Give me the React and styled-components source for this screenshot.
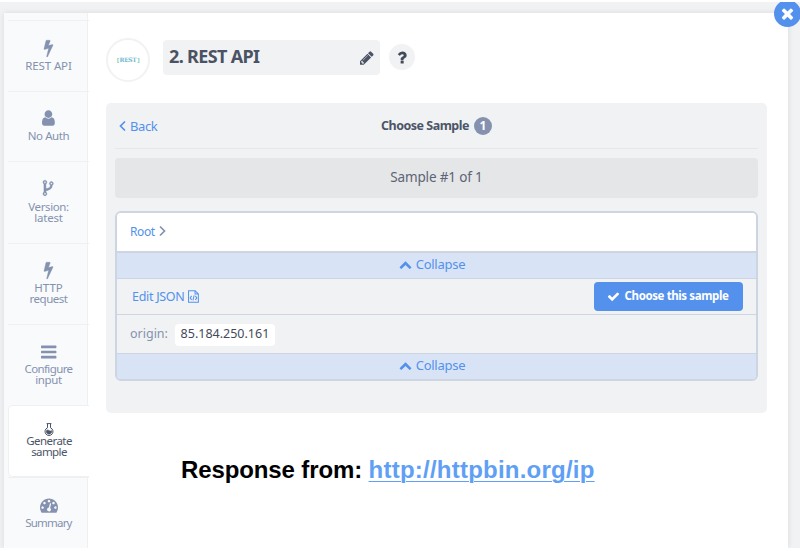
import React from "react";
import styled, { createGlobalStyle, css } from "styled-components";

const Global = createGlobalStyle`
  *{box-sizing:border-box}
  html,body,#root{margin:0;height:100%}
  body{overflow:hidden;background:#fff;font-family:"Noto Sans","Open Sans",sans-serif;color:#8492af}
`;

const PATHS = {
  bolt: [896, "M885 566q18 20 7 44l-540 1157q-13 25-42 25-4 0-14-2-17-5-25.5-19t-4.5-30l197-808-406 101q-4 1-12 1-18 0-31-11-18-15-13-39l201-825q4-14 16-23t28-9h328q19 0 32 12.5t13 29.5q0 8-5 18l-171 463 396-98q8-2 12-2 19 0 34 15z"],
  user: [1280, "M1280 1399q0 109-62.5 187t-150.5 78h-854q-88 0-150.5-78t-62.5-187q0-85 8.5-160.5t31.5-152 58.5-131 94-89 134.5-34.5q131 128 313 128t313-128q76 0 134.5 34.5t94 89 58.5 131 31.5 152 8.5 160.5zm-256-887q0 159-112.5 271.5t-271.5 112.5-271.5-112.5-112.5-271.5 112.5-271.5 271.5-112.5 271.5 112.5 112.5 271.5z"],
  fork: [1024, "M288 1472q0-40-28-68t-68-28-68 28-28 68 28 68 68 28 68-28 28-68zm0-1152q0-40-28-68t-68-28-68 28-28 68 28 68 68 28 68-28 28-68zm640 128q0-40-28-68t-68-28-68 28-28 68 28 68 68 28 68-28 28-68zm96 0q0 52-26 96.5t-70 69.5q-2 287-226 414-67 38-203 81-128 40-169.5 71t-41.5 100v26q44 25 70 69.5t26 96.5q0 80-56 136t-136 56-136-56-56-136q0-52 26-96.5t70-69.5v-820q-44-25-70-69.5t-26-96.5q0-80 56-136t136-56 136 56 56 136q0 52-26 96.5t-70 69.5v497q54-26 154-57 55-17 87.5-29.5t70.5-31 59-39.5 40.5-51 28-69.5 8.5-91.5q-44-25-70-69.5t-26-96.5q0-80 56-136t136-56 136 56 56 136z"],
  bars: [1536, "M1536 1344v128q0 26-19 45t-45 19h-1408q-26 0-45-19t-19-45v-128q0-26 19-45t45-19h1408q26 0 45 19t19 45zm0-512v128q0 26-19 45t-45 19h-1408q-26 0-45-19t-19-45v-128q0-26 19-45t45-19h1408q26 0 45 19t19 45zm0-512v128q0 26-19 45t-45 19h-1408q-26 0-45-19t-19-45v-128q0-26 19-45t45-19h1408q26 0 45 19t19 45z"],
  gauge: [1792, "M384 1152q0-53-37.5-90.5t-90.5-37.5-90.5 37.5-37.5 90.5 37.5 90.5 90.5 37.5 90.5-37.5 37.5-90.5zm192-448q0-53-37.5-90.5t-90.5-37.5-90.5 37.5-37.5 90.5 37.5 90.5 90.5 37.5 90.5-37.5 37.5-90.5zm428 481l101-382q6-26-7.5-48.5t-38.5-29.5-48 6.5-30 39.5l-101 382q-60 5-107 43.5t-63 98.5q-20 77 20 146t117 89 146-20 89-117q16-60-6-117t-72-91zm660-33q0-53-37.5-90.5t-90.5-37.5-90.5 37.5-37.5 90.5 37.5 90.5 90.5 37.5 90.5-37.5 37.5-90.5zm-640-640q0-53-37.5-90.5t-90.5-37.5-90.5 37.5-37.5 90.5 37.5 90.5 90.5 37.5 90.5-37.5 37.5-90.5zm448 192q0-53-37.5-90.5t-90.5-37.5-90.5 37.5-37.5 90.5 37.5 90.5 90.5 37.5 90.5-37.5 37.5-90.5zm320 448q0 261-141 483-19 29-54 29h-1402q-35 0-54-29-141-221-141-483 0-182 71-348t191-286 286-191 348-71 348 71 286 191 191 286 71 348z"],
  pencil: [1536, "M363 1536l91-91-235-235-91 91v107h128v128h107zm523-928q0-22-22-22-10 0-17 7l-542 542q-7 7-7 17 0 22 22 22 10 0 17-7l542-542q7-7 7-17zm-54-192l416 416-832 832h-416v-416zm683 96q0 53-37 90l-166 166-416-416 166-165q36-38 90-38 53 0 91 38l235 234q37 39 37 91z"],
  question: [1024, "M704 1256v240q0 16-12 28t-28 12h-240q-16 0-28-12t-12-28v-240q0-16 12-28t28-12h240q16 0 28 12t12 28zm316-600q0 54-15.5 101t-35 76.5-55 59.5-57.5 43.5-61 35.5q-41 23-68.5 65t-27.5 67q0 17-12 32.5t-28 15.5h-240q-15 0-25.5-18.5t-10.5-37.5v-45q0-83 65-156.5t143-108.5q59-27 84-56t25-76q0-42-46.5-74t-107.5-32q-65 0-108 29-35 25-107 115-13 16-31 16-12 0-25-8l-164-125q-13-10-15.5-25t5.500-28q160-266 464-266 80 0 161 31t146 83 106 127.5 41 158.5z"],
  check: [1792, "M1671 566q0 40-28 68l-724 724-136 136q-28 28-68 28t-68-28l-136-136-362-362q-28-28-28-68t28-68l136-136q28-28 68-28t68 28l294 295 656-657q28-28 68-28t68 28l136 136q28 28 28 68z"],
  times: [1792, "M1490 1322q0 40-28 68l-136 136q-28 28-68 28t-68-28l-294-294-294 294q-28 28-68 28t-68-28l-136-136q-28-28-28-68t28-68l294-294-294-294q-28-28-28-68t28-68l136-136q28-28 68-28t68 28l294 294 294-294q28-28 68-28t68 28l136 136q28 28 28 68t-28 68l-294 294 294 294q28 28 28 68z"],
  up: [1792, "M1683 1331l-166 165q-19 19-45 19t-45-19l-531-531-531 531q-19 19-45 19t-45-19l-166-165q-19-19-19-45.5t19-45.5l742-741q19-19 45-19t45 19l742 741q19 19 19 45.5t-19 45.5z"],
};

const Svg = styled.svg`display:block;flex:none;overflow:visible;`;

function Icon({ name, size, weight = 0 }) {
  const [w, d] = PATHS[name];
  return (
    <Svg
      viewBox={`0 0 ${w} 1792`} width={(size * w) / 1792} height={size}
      fill="currentColor" stroke="currentColor" strokeWidth={weight}
    >
      <path d={d} />
    </Svg>
  );
}

const FlaskIcon = () => (
  <Svg width="10" height="13" viewBox="0 0 10 13" fill="none" stroke="currentColor">
    <path d="M2.600.6h4.800M3.500.8v4a4 4 0 1 0 3 0v-4" strokeWidth="1" />
    <path d="M2.300 7.600q1.400-1.300 2.700-.2t2.700.2v1.900q-1 1.700-2.700 1.700t-2.700-1.700z" fill="currentColor" strokeWidth=".5" />
  </Svg>
);

const AngleIcon = ({ right }) => (
  <Svg width="7" height="12" viewBox="0 0 7 12" fill="none" stroke="currentColor" strokeWidth="1.7">
    <path d={right ? "M1 1.500 5.500 6 1 10.500" : "M6 1.500 1.500 6 6 10.500"} />
  </Svg>
);

const CodeFileIcon = () => (
  <Svg width="11" height="13" viewBox="0 0 12 14" fill="none" stroke="currentColor" strokeWidth="1.1">
    <path d="M.6.6h7.200l3.500 3.500v9.200H.6zM7.700.8v3.500h3.500" />
    <path d="M4 6.300 2.300 8.500 4 10.700M8 6.300l1.700 2.200L8 10.700M6.700 5.800l-1.300 5.400" />
  </Svg>
);

const Page = styled.div`
  height:548px;width:800px;padding:11px 12px 0 4px;border-top:2px solid #fff;
  background:#f1f2f4;position:relative;
`;
const Modal = styled.div`
  height:535px;display:flex;background:#fff;box-shadow:0 0 6px rgba(0,0,0,.1);clip-path:inset(-10px -10px 0 -10px);
`;
const Close = styled.button`
  position:absolute;top:-2px;left:774px;width:27px;height:27px;border:0;border-radius:50%;padding:0;
  display:grid;place-items:center;background:#5391ec;color:#fff;clip-path:inset(2px 0 0 0);
`;
const Sidebar = styled.nav`
  width:84px;flex:none;padding:7px 0 0 4px;background:#f9fafc;border-right:1px solid #eef0f2;
`;
const Step = styled.div`
  height:${p => p.$h}px;width:81px;padding:${p => p.$pad}px 0 0;border-top:1px solid #eef0f2;
  display:flex;flex-direction:column;align-items:center;text-align:center;
  font-size:11.5px;line-height:11px;
  ${p => p.$active && css`
    color:#4c5568;background:#fff;border:1px solid #eef0f2;border-right:0;border-radius:5px 0 0 5px;
  `}
`;
const StepLabel = styled.div`margin-top:${p => p.$gap}px;`;
const Line = styled.div`letter-spacing:${p => p.$ls || 0}px;`;

const Content = styled.main`flex:1;padding:25px 21px 0 18px;`;
const Header = styled.header`display:flex;height:44px;`;
const Logo = styled.div`
  width:44px;height:44px;border:2px solid #f1f2f4;border-radius:50%;display:grid;place-items:center;
  font:700 6px/8px "DejaVu Serif","Liberation Serif",serif;letter-spacing:-.4px;color:#6fb9d0;
`;
const Bracket = styled.span`color:#68c9a0;font-family:"Liberation Sans",sans-serif;margin:0 1px;`;
const Title = styled.div`
  width:217px;height:35px;margin:2px 0 0 13px;padding:0 6px;border-radius:4px;background:#f1f2f4;
  display:flex;align-items:center;justify-content:space-between;color:#4a5264;
  font-size:18px;font-weight:700;
`;
const Text = styled.span`
  letter-spacing:${p => p.$ls || 0}px;margin-bottom:${p => p.$lift || 0}px;white-space:nowrap;
`;
const Help = styled.div`
  width:26px;height:26px;margin:6px 0 0 9px;border-radius:50%;background:#f1f2f4;color:#434b5b;
  display:grid;place-items:center;
`;
const Panel = styled.section`
  width:661px;height:310px;margin-top:21px;padding:0 9px;border-radius:5px;background:#f1f2f4;
`;
const PanelHead = styled.div`
  height:46px;border-bottom:1px solid #e5e7ec;display:grid;grid-template-columns:1fr auto 1fr;align-items:center;
  padding:0 4px;font-size:13px;
`;
const Link = styled.span`
  display:flex;align-items:center;gap:4px;color:#5391ec;
`;
const Heading = styled.div`
  display:flex;align-items:center;gap:5px;color:#4c5568;font-weight:700;font-size:12.5px;
`;
const Count = styled.span`
  width:18px;height:18px;border-radius:50%;background:#8492af;color:#fff;
  display:grid;place-items:center;font-size:12px;line-height:18px;
`;
const SampleBar = styled.div`
  height:40px;margin-top:9px;border-radius:4px;background:#e5e6e8;color:#5c6475;
  display:flex;align-items:center;justify-content:center;font-size:13.5px;
`;
const Box = styled.div`
  height:170px;width:643px;margin-top:13px;border:2px solid #ccd5e1;border-radius:6px;overflow:hidden;
`;
const Crumb = styled.div`
  height:40px;padding:0 0 2px 13px;border-bottom:2px solid #ccd5e1;background:#fff;
  display:flex;align-items:center;gap:4px;font-size:12px;
`;
const Collapse = styled.div`
  height:25px;padding:0 9px 2px 0;background:#d8e4f6;color:#5391ec;
  display:flex;align-items:center;justify-content:center;gap:4px;font-size:13px;
`;
const Row = styled.div`
  height:${p => p.$h}px;padding:0 13px;border:solid #ccd5e1;border-width:1px 0 ${p => p.$last ? 1 : 0}px;
  display:flex;align-items:center;font-size:12.5px;
`;
const EditLink = styled(Link)`margin-left:2px;flex:1;`;
const Choose = styled.button`
  width:149px;height:29px;border:0;border-radius:4px;background:#5391ec;color:#fff;
  display:flex;align-items:center;justify-content:center;gap:5px;padding:0 2px 0 0;
  font:700 11.5px "Noto Sans",sans-serif;
`;
const Value = styled.span`
  height:22px;width:100px;margin:1px 0 0 7px;border-radius:4px;background:#fff;color:#434b5b;
  line-height:20px;text-align:center;
`;
const Caption = styled.p`
  margin:43px 0 0 75px;font:700 24px/28px "Liberation Sans",Arial,sans-serif;color:#000;white-space:nowrap;
  letter-spacing:-.12px;
`;
const Url = styled.a`
  color:#5f9ff5;text-decoration:underline;text-decoration-thickness:1px;text-underline-offset:3px;letter-spacing:.23px;
`;

const STEPS = [
  { icon: "bolt", size: 18, weight: 40, lines: [["REST API", -0.12]], h: 71, pad: 18, gap: 3 },
  { icon: "user", size: 18, lines: [["No Auth", -0.4]], h: 70, pad: 17, gap: 3 },
  { icon: "fork", size: 18, weight: 50, lines: [["Version:", -0.4], ["latest", -0.2]], h: 82, pad: 17, gap: 4 },
  { icon: "bolt", size: 18, weight: 40, lines: [["HTTP", 0], ["request", -0.5]], h: 81, pad: 17, gap: 3 },
  { icon: "bars", size: 18, lines: [["Configure", -0.6], ["input", -0.4]], h: 81, pad: 18, gap: 2 },
  { icon: "flask", lines: [["Generate", -0.55], ["sample", -0.6]], h: 72, pad: 17, gap: -1, active: true },
  { icon: "gauge", size: 18, lines: [["Summary", -0.8]], h: 70, pad: 18, gap: 3 },
];

const CollapseBar = () => (
  <Collapse><Icon name="up" size={13} /><Text $ls={-0.25} $lift={2}>Collapse</Text></Collapse>
);

export default function App() {
  return (
    <Page>
      <Global />
      <Modal>
        <Sidebar>
          {STEPS.map((s, i) => (
            <Step key={i} $h={s.h} $pad={s.pad} $active={s.active}>
              {s.icon === "flask" ? <FlaskIcon /> : <Icon name={s.icon} size={s.size} weight={s.weight} />}
              <StepLabel $gap={s.gap}>
                {s.lines.map(([l, ls]) => <Line key={l} $ls={ls}>{l}</Line>)}
              </StepLabel>
            </Step>
          ))}
        </Sidebar>
        <Content>
          <Header>
            <Logo><span><Bracket>[</Bracket>REST<Bracket>]</Bracket></span></Logo>
            <Title><Text $ls={-0.65} $lift={3}>2. REST API</Text><Icon name="pencil" size={16} /></Title>
            <Help><Icon name="question" size={17} /></Help>
          </Header>
          <Panel>
            <PanelHead>
              <Link><AngleIcon /><Text $ls={-0.4}>Back</Text></Link>
              <Heading><Text $ls={-0.5}>Choose Sample</Text><Count>1</Count></Heading>
            </PanelHead>
            <SampleBar><Text $ls={-0.15} $lift={2}>Sample #1 of 1</Text></SampleBar>
            <Box>
              <Crumb><Link><Text $ls={-0.4}>Root</Text></Link><AngleIcon right /></Crumb>
              <CollapseBar />
              <Row $h={36}>
                <EditLink><Text $ls={-0.3} $lift={1}>Edit JSON</Text><CodeFileIcon /></EditLink>
                <Choose><Icon name="check" size={13} /><Text $ls={-0.4} $lift={2}>Choose this sample</Text></Choose>
              </Row>
              <Row $h={40} $last><Text $lift={1}>origin:</Text><Value><Text>85.184.250.161</Text></Value></Row>
              <CollapseBar />
            </Box>
          </Panel>
          <Caption>Response from: <Url>http://httpbin.org/ip</Url></Caption>
        </Content>
      </Modal>
      <Close aria-label="Close"><Icon name="times" size={17} /></Close>
    </Page>
  );
}
